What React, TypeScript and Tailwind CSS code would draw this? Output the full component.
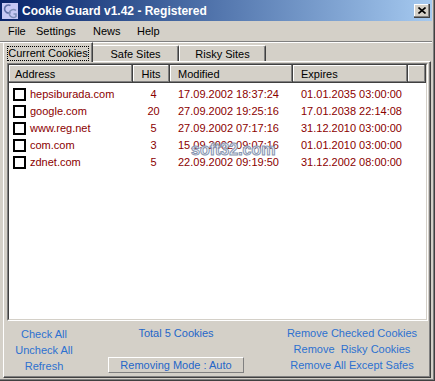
import React from 'react';

interface CookieRow {
  address: string;
  hits: string;
  modified: string;
  expires: string;
}

const rows: CookieRow[] = [
  { address: 'hepsiburada.com', hits: '4', modified: '17.09.2002 18:37:24', expires: '01.01.2035 03:00:00' },
  { address: 'google.com', hits: '20', modified: '27.09.2002 19:25:16', expires: '17.01.2038 22:14:08' },
  { address: 'www.reg.net', hits: '5', modified: '27.09.2002 07:17:16', expires: '31.12.2010 03:00:00' },
  { address: 'com.com', hits: '3', modified: '15.09.2002 09:07:16', expires: '01.01.2010 03:00:00' },
  { address: 'zdnet.com', hits: '5', modified: '22.09.2002 09:19:50', expires: '31.12.2002 08:00:00' },
];

const headCell =
  'h-[18px] flex items-center pt-[2px] border-r border-b border-[#404040] shadow-[inset_-1px_-1px_0_#808080,inset_1px_1px_0_#ffffff] bg-[#d4d0c8]';

function AppIcon() {
  return (
    <svg width="16" height="16" viewBox="0 0 16 16">
      <rect x="0" y="0" width="16" height="16" fill="#c6c8f4" />
      <path d="M8.5 2.5 A4 4 0 1 0 8.5 9.5" fill="none" stroke="#6070a8" strokeWidth="1.6" />
      <path d="M14 7.5 A4 4 0 1 0 14 13.5 L14 11 L11.5 11" fill="none" stroke="#8090b8" strokeWidth="1.6" />
    </svg>
  );
}

export default function App() {
  return (
    <div className="w-[435px] h-[381px] bg-[#d4d0c8] relative overflow-hidden font-['Liberation_Sans',Arial,sans-serif] text-[11px] text-black border-r border-b border-[#404040]">
      <div className="h-full flex flex-col border-r border-b border-[#808080]">
        {/* title bar */}
        <div className="h-[21px] mr-[1px] flex items-start bg-linear-to-r from-[#0a246a] to-[#a6caf0]">
          <div className="ml-[2px] mt-[3px]">
            <AppIcon />
          </div>
          <span className="ml-[4px] mt-[4px] leading-[14px] text-[12px] font-bold text-white">
            Cookie Guard v1.42 - Registered
          </span>
          <div className="ml-auto mr-[2px] mt-[4px] w-[16px] h-[14px] bg-[#d4d0c8] border-r border-b border-[#404040] shadow-[inset_-1px_-1px_0_#808080,inset_1px_1px_0_#ffffff] flex items-center justify-center">
            <svg width="8" height="7" viewBox="0 0 8 7">
              <path d="M0.5 0.5 L7.5 6.5 M7.5 0.5 L0.5 6.5" stroke="#000" strokeWidth="1.6" />
            </svg>
          </div>
        </div>

        {/* menu */}
        <div className="h-[20px] flex items-center pl-[8px] leading-[20px]">
          <span className="w-[28px]">File</span>
          <span className="w-[57px]">Settings</span>
          <span className="w-[44px]">News</span>
          <span>Help</span>
        </div>
        <div className="h-[2px] mr-[1px] border-t border-[#808080] border-b border-b-white" />

        {/* tabs */}
        <div className="h-[18px] flex items-end pl-[3px]">
          <div className="relative z-10 h-[20px] -mb-px w-[90px] bg-[#d4d0c8] border-t border-l border-white rounded-tl-[2px] border-r border-r-[#404040] shadow-[inset_-1px_0_0_#808080] pt-[3px] px-[3px]">
            <div className="h-[15px] border border-dotted border-black flex items-center justify-center leading-[13px]">
              Current Cookies
            </div>
          </div>
          <div className="h-[16px] w-[86px] border-t border-white border-r border-r-[#404040] shadow-[inset_-1px_0_0_#808080] rounded-tr-[2px] flex items-center justify-center pt-[1px]">
            Safe Sites
          </div>
          <div className="h-[16px] w-[87px] border-t border-l border-white border-r border-r-[#404040] shadow-[inset_-1px_0_0_#808080] rounded-tr-[2px] flex items-center justify-center pt-[1px]">
            Risky Sites
          </div>
        </div>

        {/* panel */}
        <div className="flex-1 ml-[3px] mr-[2px] mb-[1px] border-t border-l border-white border-r border-b border-r-[#404040] border-b-[#404040] shadow-[inset_-1px_-1px_0_#808080] pl-[3px] pt-[1px] flex flex-col">
          <div className="w-[421px] h-[258px] border border-t-[#808080] border-l-[#808080] border-r-white border-b-white flex">
            <div className="flex-1 bg-white border border-t-[#404040] border-l-[#404040] border-r-[#d4d0c8] border-b-[#d4d0c8]">
              <div className="flex">
                <div className={`${headCell} w-[124px] pl-[6px]`}>Address</div>
                <div className={`${headCell} w-[37px] justify-center`}>Hits</div>
                <div className={`${headCell} w-[123px] pl-[8px]`}>Modified</div>
                <div className={`${headCell} w-[115px] pl-[8px]`}>Expires</div>
                <div className={`${headCell} flex-1`} />
              </div>
              <div className="pt-[3px] text-[#8b0000]">
                {rows.map((r) => (
                  <div key={r.address} className="h-[17px] flex items-center">
                    <div className="w-[124px] pl-[4px] flex items-center">
                      <span className="w-[13px] h-[13px] border-2 border-black bg-white" />
                      <span className="ml-[4px]">{r.address}</span>
                    </div>
                    <div className="w-[37px] pl-[4px] text-center">{r.hits}</div>
                    <div className="w-[123px] pl-[8px]">{r.modified}</div>
                    <div className="w-[115px] pl-[8px]">{r.expires}</div>
                  </div>
                ))}
              </div>
            </div>
          </div>

          {/* bottom controls */}
          <div className="flex pt-[4px] leading-[16px] text-[#2d70d0]">
            <div className="w-[80px] -ml-[3px] flex flex-col items-center pt-[1px]">
              <span>Check All</span>
              <span>Uncheck All</span>
              <span>Refresh</span>
            </div>
            <div className="ml-[16px] w-[152px] flex flex-col items-center">
              <span className="text-[#2466c8]">Total 5 Cookies</span>
              <div className="mt-[16px] w-[136px] h-[16px] border border-t-white border-l-white border-r-[#808080] border-b-[#808080] flex items-center justify-center leading-[14px] text-[#2466c8]">
                Removing Mode : Auto
              </div>
            </div>
            <div className="ml-[25px] w-[150px] flex flex-col items-center">
              <span>Remove Checked Cookies</span>
              <span className="whitespace-pre">Remove  Risky Cookies</span>
              <span>Remove All Except Safes</span>
            </div>
          </div>
        </div>
      </div>

      {/* watermark */}
      <span className="absolute left-[191px] top-[142px] text-[16px] leading-[16px] font-bold text-[#eef2f8]/90 [-webkit-text-stroke:1px_#8896b0] pointer-events-none">
        soft32.com
      </span>
    </div>
  );
}
